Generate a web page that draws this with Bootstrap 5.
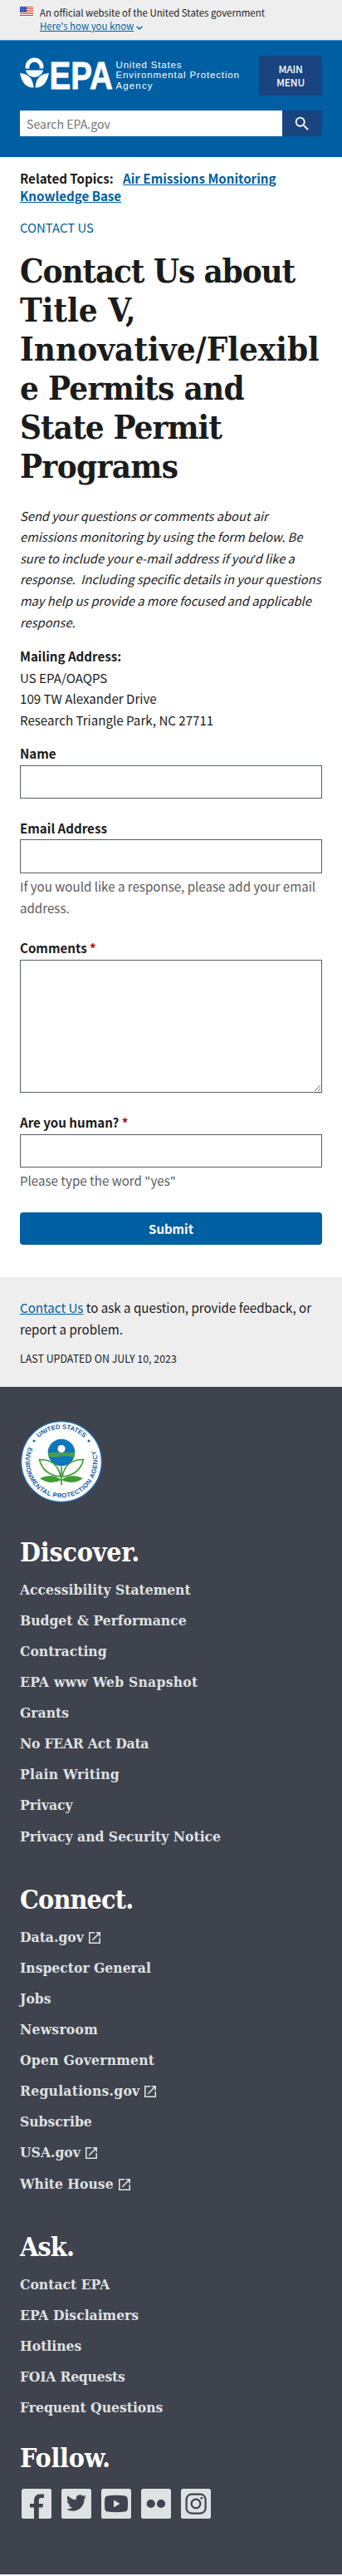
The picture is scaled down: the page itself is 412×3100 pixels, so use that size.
<!DOCTYPE html>
<html lang="en">
<head>
<meta charset="utf-8">
<meta name="viewport" content="width=device-width, initial-scale=1">
<title>Contact Us about Title V, Innovative/Flexible Permits and State Permit Programs | US EPA</title>
<link href="https://cdn.jsdelivr.net/npm/bootstrap@5.3.0/dist/css/bootstrap.min.css" rel="stylesheet">
<style>
body{font-family:"Noto Sans CJK SC",sans-serif;font-size:15.12px;line-height:25.6px;color:#1b1b1b}
a{color:#005ea2}
.serif{font-family:"DejaVu Serif Condensed","DejaVu Serif",serif;font-weight:700}
.gutter{padding-left:24px;padding-right:24px}
.gov-banner{background:#eee;height:48px;font-size:11.43px;line-height:16px;padding-top:7px}
.gov-banner svg{margin-top:1px}
.site-header{background:#005ea2;height:141px;border-top:1px solid #4a97cb;padding-top:17px}
.logo{overflow:visible;margin-top:-4px}
.menu-btn{background:#1a4480;color:#fff;width:76px;height:48px;border-radius:0;font-size:12px;line-height:16px;font-weight:500;letter-spacing:-.2px;padding:0;margin-top:1px}
.search-row{margin-top:17px;height:31px}
.search-row input{border:0;border-radius:0;height:31px;padding:0 8px;font-size:14.15px;color:#1b1b1b}
.search-row input::placeholder{color:#757575;opacity:1}
.search-btn{background:#1a4480;width:48px;height:31px;border-radius:0;padding:0}
.topics{font-weight:700;line-height:21px;padding-top:15px}
.kicker{line-height:21px;margin-top:17px;font-size:14.9px}
h1.serif{font-size:40px;line-height:47px;margin:18px 0 23.6px}
h1 span{display:block;white-space:nowrap}
.snug{letter-spacing:-.7px}
.tight{letter-spacing:-.93px}
.tighter{letter-spacing:-1.14px}
.intro{font-size:14.7px;font-style:italic;margin-bottom:16px}
.apos{font-family:"Open Sans",sans-serif;line-height:1}
.field{margin-top:24.6px}
.field label{display:block;font-weight:700;line-height:20.8px;margin-bottom:4.2px}
.field .form-control{height:40.4px;border:1px solid #565c65;border-radius:0}
.field textarea.form-control{height:160.4px}
.field-help{color:#5c5c5c;margin:3.2px 0 .6px}
.req{color:#b50909}
.submit-btn{background:#005ea2;color:#fff;font-weight:700;height:39.4px;border-radius:4px;padding:0;font-size:15.02px;margin-top:24.6px;line-height:37px}
.page-foot{background:#eee;margin-top:39.2px;height:132px;padding-top:24px}
.updated{font-size:12.42px;line-height:22px;margin-top:12px}
.site-footer{background:#3f434e;height:1429px;padding-top:41px;color:#fff}
.site-footer h2{font-size:32px;line-height:40px;letter-spacing:-.24px;margin:0 0 6.7px}
.site-footer h2.snug{letter-spacing:-.85px}
.site-footer ul{margin:0 0 37.4px}
.site-footer ul.last-list{margin-bottom:21.5px}
.site-footer li{font-size:17.35px;height:37.1px;line-height:37.1px;white-space:nowrap}
.site-footer li a{color:#dfe1e2;text-decoration:none}
.w-plus{letter-spacing:.25px}
.w-minus{letter-spacing:-.22px}
.ext{margin-left:6px;vertical-align:-2px}
.seal{display:block;margin-bottom:40px}
.social{padding:10.6px 0 0 2px;gap:12px}
</style>
</head>
<body>
<div class="gov-banner gutter d-flex gap-2">
  <svg width="16" height="11" viewBox="0 0 16 11"><rect width="16" height="11" fill="#fff"/><path d="M0 .5h16M0 2.5h16M0 4.5h16M0 6.5h16M0 8.5h16M0 10.5h16" stroke="#db3e1f"/><rect width="8" height="6.5" fill="#1e33b1"/><path d="M1 1.5h6M1 3.5h6M1 5.3h6" stroke="#fff" stroke-width=".8" stroke-dasharray=".8 .9"/></svg>
  <div>
    <div>An official website of the United States government</div>
    <a href="#">Here's how you know</a>
    <svg width="8" height="5" viewBox="0 0 8 5" fill="none" stroke="#005ea2" stroke-width="1.3"><path d="M.7.7 4 4 7.3.7"/></svg>
  </div>
</div>
<header class="site-header gutter">
  <div class="d-flex justify-content-between align-items-start">
    <svg width="266" height="54" viewBox="0 -4 266 54" fill="#fff" class="logo">
      <path d="M6.700 16.500A11 11 0 1 1 28.300 16.500H23.500a6.200 6.200 0 1 0-12 0Z"/>
      <path d="M6.800 18.500h21.400a11 11 0 0 1-21.400 0Z"/>
      <path d="M0 22c9 .5 15.500 5 16.600 17.500C6.500 39.500 2.500 33 0 22ZM35 22c-9 .5-15.500 5-16.600 17.500C28.500 39.500 32.500 33 35 22Z"/>
      <text x="35.500" y="40.500" font-family="Liberation Sans" font-weight="700" font-size="47" textLength="76.500" lengthAdjust="spacingAndGlyphs" stroke="#fff" stroke-width=".8">EPA</text>
      <g font-family="Liberation Sans" font-size="11.500"><text x="115.500" y="16" textLength="79">United States</text><text x="115.500" y="28" textLength="148.500">Environmental Protection</text><text x="115.500" y="41" textLength="44">Agency</text></g>
    </svg>
    <button class="btn menu-btn">MAIN<br>MENU</button>
  </div>
  <form class="search-row d-flex">
    <input class="form-control" placeholder="Search EPA.gov" aria-label="Search">
    <button type="button" class="btn search-btn d-flex align-items-center justify-content-center flex-shrink-0" aria-label="Search"><svg width="22" height="22" viewBox="0 0 24 24" fill="#fff"><path d="M15.500 14h-.790l-.280-.270A6.470 6.470 0 0 0 16 9.500 6.500 6.500 0 1 0 9.500 16c1.610 0 3.090-.590 4.230-1.570l.270.280v.790l5 4.990L20.490 19l-4.990-5zm-6 0C7.010 14 5 11.990 5 9.500S7.010 5 9.500 5 14 7.010 14 9.500 11.990 14 9.500 14z"/></svg></button>
  </form>
</header>
<main class="gutter">
  <div class="topics"><span class="me-2">Related Topics:</span> <a href="#">Air Emissions Monitoring Knowledge Base</a></div>
  <div class="kicker"><a href="#" class="text-decoration-none">CONTACT US</a></div>
  <h1 class="serif"><span class="tighter">Contact Us about</span><span>Title V,</span><span>Innovative/Flexibl</span><span class="snug">e Permits and</span><span class="tight">State Permit</span><span class="snug">Programs</span></h1>
  <p class="intro">Send your questions or comments about air emissions monitoring by using the form below. Be sure to include your e-mail address if you<span class="apos">’</span>d like a response.&nbsp; Including specific details in your questions may help us provide a more focused and applicable response.</p>
  <p class="mb-0"><strong>Mailing Address:</strong><br>US EPA/OAQPS<br>109 TW Alexander Drive<br>Research Triangle Park, NC 27711</p>
  <form>
    <div class="field mt-3"><label for="name">Name</label><input id="name" class="form-control"></div>
    <div class="field"><label for="email">Email Address</label><input id="email" class="form-control"><div class="field-help">If you would like a response, please add your email address.</div></div>
    <div class="field"><label for="comments">Comments <span class="req">*</span></label><textarea id="comments" class="form-control d-block"></textarea></div>
    <div class="field"><label for="human">Are you human? <span class="req">*</span></label><input id="human" class="form-control"><div class="field-help">Please type the word "yes"</div></div>
    <button type="button" class="btn submit-btn w-100 d-block">Submit</button>
  </form>
</main>
<div class="page-foot gutter">
  <div><a href="#">Contact Us</a> to ask a question, provide feedback, or report a problem.</div>
  <div class="updated">LAST UPDATED ON JULY 10, 2023</div>
</div>
<footer class="site-footer gutter">
  <svg class="seal" width="100" height="98" viewBox="0 0 100 98">
    <defs><path id="arcTop" d="M10.500 49a39.500 39.500 0 0 1 79 0"/><path id="arcLow" d="M11.700 28.700A43.400 43.400 0 1 0 88.300 28.700"/></defs>
    <circle cx="50" cy="49" r="48.300" fill="#fff" stroke="#1e75bd" stroke-width="1.200"/>
    <g font-family="Liberation Sans" font-weight="700" font-size="7.800" fill="#1c5fa8">
      <text textLength="60"><textPath href="#arcTop" startOffset="32">UNITED STATES</textPath></text>
      <text textLength="168"><textPath href="#arcLow" startOffset="3">ENVIRONMENTAL PROTECTION AGENCY</textPath></text>
    </g>
    <circle cx="17" cy="24" r="1.500" fill="#1c5fa8"/><circle cx="83" cy="24" r="1.500" fill="#1c5fa8"/>
    <circle cx="50" cy="38" r="16.300" fill="#0e76bc"/><path d="M33.800 38h32.400a16 16 0 0 1-1.200 6q-8-3-15-1.500T35 43a16 16 0 0 1-1.200-5Z" fill="#4ba046"/><circle cx="50" cy="33.500" r="4.600" fill="#fff"/>
    <path d="M50 55v22" stroke="#3f9c35" stroke-width="1.700"/>
    <g fill="none" stroke="#3f9c35" stroke-width="1.600"><path d="M49 67Q28 65 23.500 46.500 45 46 49 67ZM51 67Q72 65 76.500 46.500 55 46 51 67Z"/></g>
    <path d="M50 71q-11-9-26-2 12 9 26 2ZM50 71q11-9 26-2-12 9-26 2Z" fill="#3f9c35"/>
  </svg>
  <svg class="d-none"><symbol id="launch" viewBox="3 3 18 18"><path fill="#dfe1e2" d="M19 19H5V5h7V3H3v18h18v-9h-2v7zM14 3v2h3.590l-9.830 9.830 1.410 1.410L19 6.410V10h2V3h-7z"/></symbol></svg>
  <h2 class="serif">Discover.</h2>
  <ul class="list-unstyled serif">
    <li><a href="#">Accessibility Statement</a></li>
    <li><a href="#">Budget &amp; Performance</a></li>
    <li><a href="#">Contracting</a></li>
    <li><a href="#" class="w-plus">EPA www Web Snapshot</a></li>
    <li><a href="#">Grants</a></li>
    <li><a href="#" class="w-minus">No FEAR Act Data</a></li>
    <li><a href="#" class="w-plus">Plain Writing</a></li>
    <li><a href="#">Privacy</a></li>
    <li><a href="#">Privacy and Security Notice</a></li>
  </ul>
  <h2 class="serif snug">Connect.</h2>
  <ul class="list-unstyled serif">
    <li><a href="#">Data.gov<svg class="ext" width="14" height="14"><use href="#launch"/></svg></a></li>
    <li><a href="#">Inspector General</a></li>
    <li><a href="#">Jobs</a></li>
    <li><a href="#" class="w-plus">Newsroom</a></li>
    <li><a href="#" class="w-plus">Open Government</a></li>
    <li><a href="#" class="w-plus">Regulations.gov<svg class="ext" width="14" height="14"><use href="#launch"/></svg></a></li>
    <li><a href="#">Subscribe</a></li>
    <li><a href="#">USA.gov<svg class="ext" width="14" height="14"><use href="#launch"/></svg></a></li>
    <li><a href="#">White House<svg class="ext" width="14" height="14"><use href="#launch"/></svg></a></li>
  </ul>
  <h2 class="serif snug">Ask.</h2>
  <ul class="list-unstyled serif last-list">
    <li><a href="#">Contact EPA</a></li>
    <li><a href="#">EPA Disclaimers</a></li>
    <li><a href="#">Hotlines</a></li>
    <li><a href="#" class="w-minus">FOIA Requests</a></li>
    <li><a href="#">Frequent Questions</a></li>
  </ul>
  <h2 class="serif">Follow.</h2>
  <div class="social d-flex">
    <svg width="36" height="36" viewBox="0 0 36 36"><rect width="36" height="36" rx="2.500" fill="#dfe1e2"/><path fill="#3f434e" d="M15 36V22.500h-5V18h5v-3.500C15 9.500 17.500 6.500 22.500 6.500H27V11h-3.200c-2.300 0-3 1-3 3v4H26l-.7 4.500h-4.500V36Z"/></svg>
    <svg width="36" height="36" viewBox="0 0 36 36"><rect width="36" height="36" rx="2.500" fill="#dfe1e2"/><path fill="#3f434e" transform="translate(6 5)" d="M23.950 4.570a10 10 0 0 1-2.820.770 4.960 4.960 0 0 0 2.160-2.720c-.950.550-2 .950-3.130 1.180a4.920 4.920 0 0 0-8.380 4.480C7.690 8.090 4.070 6.130 1.640 3.160a4.920 4.920 0 0 0 1.520 6.570 4.900 4.900 0 0 1-2.230-.610v.060a4.920 4.920 0 0 0 3.950 4.830 5 5 0 0 1-2.210.080 4.940 4.940 0 0 0 4.600 3.420A9.870 9.870 0 0 1 0 19.540a14 14 0 0 0 7.550 2.210c9.050 0 14-7.500 14-13.980 0-.210 0-.420-.020-.630a9.900 9.900 0 0 0 2.420-2.570z"/></svg>
    <svg width="36" height="36" viewBox="0 0 36 36"><rect width="36" height="36" rx="2.500" fill="#dfe1e2"/><path fill="#3f434e" d="M7.500 8.400Q18 7.200 28.500 8.400 31.300 8.700 31.700 11.500 32.400 18 31.700 24.500 31.300 27.300 28.500 27.600 18 28.800 7.500 27.600 4.700 27.300 4.300 24.500 3.600 18 4.300 11.500 4.700 8.700 7.500 8.400Z"/><path fill="#dfe1e2" d="m15 13.500 7.500 4.500-7.500 4.500Z"/></svg>
    <svg width="36" height="36" viewBox="0 0 36 36"><rect width="36" height="36" rx="2.500" fill="#dfe1e2"/><circle cx="11.700" cy="18" r="5.100" fill="#3f434e"/><circle cx="24" cy="18" r="5.100" fill="#3f434e"/></svg>
    <svg width="36" height="36" viewBox="0 0 36 36"><rect width="36" height="36" rx="2.500" fill="#dfe1e2"/><g fill="none" stroke="#3f434e" stroke-width="2.200"><rect x="6.600" y="6.600" width="23" height="23" rx="6.200"/><circle cx="18" cy="18" r="5.400"/></g><circle cx="24.800" cy="11.300" r="1.400" fill="#3f434e"/></svg>
  </div>
</footer>
<script src="https://cdn.jsdelivr.net/npm/bootstrap@5.3.0/dist/js/bootstrap.bundle.min.js"></script>
</body>
</html>
